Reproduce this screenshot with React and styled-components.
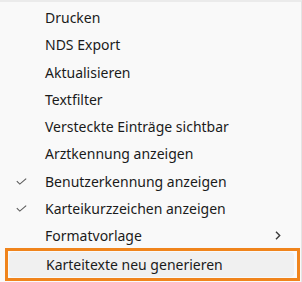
import React from "react";
import styled, { createGlobalStyle } from "styled-components";

const GlobalStyle = createGlobalStyle`
  html, body {
    margin: 0;
    padding: 0;
    background: #f9f9f9;
  }
  body {
    font-family: "Noto Sans", "Open Sans", sans-serif;
  }
`;

const Menu = styled.div`
  width: 302px;
  height: 282px;
  box-sizing: border-box;
  background: #f9f9f9;
  border-top: 2px solid #ebebeb;
  border-right: 1px solid #e4e4e4;
  padding-top: 2px;
  display: flex;
  flex-direction: column;
  overflow: hidden;
`;

const Item = styled.div`
  height: ${props => (props.highlighted ? 25 : 27.25)}px;
  flex-shrink: 0;
  display: flex;
  align-items: center;
  position: relative;
  padding-left: ${props => (props.highlighted ? 37 : 45)}px;
  padding-right: 20px;
  font-size: 14px;
  color: #1b1b1b;
  background: ${props => (props.highlighted ? "#f0f0f0" : "transparent")};
  border-radius: 4px;
  white-space: nowrap;
`;

const Check = styled.svg`
  position: absolute;
  left: 16px;
  top: 50%;
  margin-top: -3px;
`;

const Chevron = styled.svg`
  margin-left: auto;
  margin-right: 0px;
`;

const Marked = styled.div`
  margin: -1px 1px 0 5px;
  border: 3px solid #f0841c;
  padding: 1px 3px 1px 1px;
`;

const items = [
  { label: "Drucken" },
  { label: "NDS Export" },
  { label: "Aktualisieren" },
  { label: "Textfilter" },
  { label: "Versteckte Einträge sichtbar" },
  { label: "Arztkennung anzeigen" },
  { label: "Benutzerkennung anzeigen", checked: true },
  { label: "Karteikurzzeichen anzeigen", checked: true },
  { label: "Formatvorlage", submenu: true }
];

const CheckIcon = () => (
  <Check width="11" height="7" viewBox="0 0 11 7">
    <path d="M0.8 3.2 L3.8 6.1 L10.2 0.6" fill="none" stroke="#5a5a5a" strokeWidth="1.1" />
  </Check>
);

const ChevronIcon = () => (
  <Chevron width="6" height="9" viewBox="0 0 6 9">
    <path d="M1 0.8 L4.7 4.5 L1 8.2" fill="none" stroke="#3a3a3a" strokeWidth="1.4" />
  </Chevron>
);

export default function App() {
  return (
    <>
      <GlobalStyle />
      <Menu>
        {items.map(item => (
          <Item key={item.label}>
            {item.checked && <CheckIcon />}
            {item.label}
            {item.submenu && <ChevronIcon />}
          </Item>
        ))}
        <Marked>
          <Item highlighted>Karteitexte neu generieren</Item>
        </Marked>
      </Menu>
    </>
  );
}
